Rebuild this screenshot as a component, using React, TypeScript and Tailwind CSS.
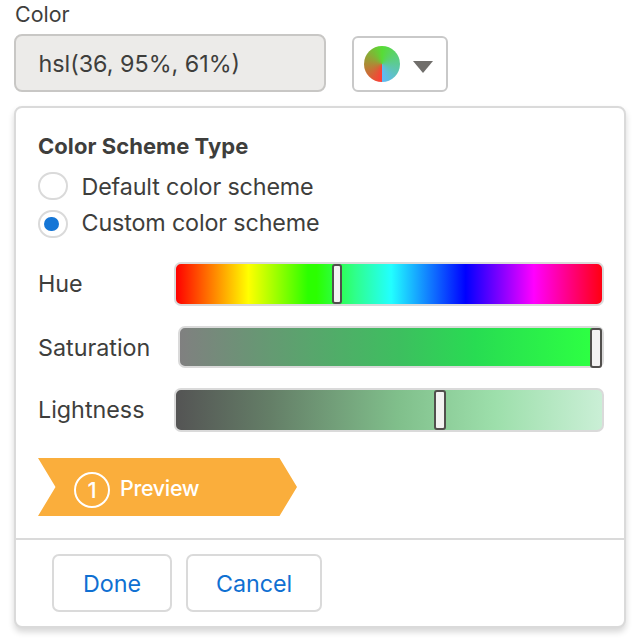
import type { ReactNode } from "react";

function Radio({ checked, label, className, labelClass }: { checked?: boolean; label: string; className: string; labelClass: string }) {
  return (
    <label className={`flex h-7 items-center ${className}`}>
      <span className="flex h-7 w-[30px] shrink-0 items-center rounded-full border-2 border-[#dadada] bg-white pl-1">
        {checked && <span className="h-3.5 w-[15px] rounded-[7px] bg-[#1576d6]" />}
      </span>
      <span className={`ml-[13.5px] whitespace-nowrap text-[23.3px] leading-7 tracking-[-0.14px] ${labelClass}`}>{label}</span>
    </label>
  );
}

function SliderRow({ label, className, labelClass = "", children }: { label: string; className: string; labelClass?: string; children: ReactNode }) {
  return (
    <div className={`flex items-center justify-between ${className}`}>
      <span className={`whitespace-nowrap text-[23.3px] leading-7 ${labelClass}`}>{label}</span>
      {children}
    </div>
  );
}

export default function App() {
  return (
    <main className="h-[642px] w-[642px] overflow-hidden bg-white pl-3.5 font-['Inter',sans-serif] text-[#3e3e3c]">
      <div className="h-[34px] pl-px text-[21.4px] leading-7">Color</div>
      <div className="flex items-end gap-[26px]">
        <div className="flex h-[58px] w-[312px] items-center rounded-lg border-2 border-[#c8c7c5] bg-[#ecebe9] pt-0.5 pl-[22.5px] text-[23.3px] whitespace-nowrap">
          hsl(36, 95%, 61%)
        </div>
        <button className="flex h-14 w-24 items-center rounded-md border-2 border-[#c9c9c9] bg-white pl-2.5">
          <span className="size-9 rounded-full bg-[conic-gradient(from_180deg,#ff3c37,#57dc35_50%,#62b8f8)]" />
          <svg className="mt-1.5 ml-[13px] h-3 w-5" viewBox="0 0 20 12">
            <path d="M0 0h20L10 12z" fill="#706e6b" />
          </svg>
        </button>
      </div>

      <section className="mt-3.5 h-[522px] w-[612px] rounded-lg border-2 border-[#dadada] bg-white shadow-[0_4px_6px_rgba(0,0,0,0.16)]">
        <div className="h-[430px] pr-5 pl-[22px]">
          <h2 className="pt-6 text-[22px] leading-7 font-bold tracking-[0.05px]">Color Scheme Type</h2>
          <Radio label="Default color scheme" className="mt-3" labelClass="pt-0.5" />
          <Radio label="Custom color scheme" className="mt-2.5" labelClass="pb-0.5" checked />

          <SliderRow label="Hue" className="mt-6 h-11">
            <div className="h-11 w-[430px] rounded-[7px] border-2 border-[#dadada] bg-[linear-gradient(to_right,#f00,#ff0_17%,#2bff00_31%,#2bff00_33%,#2fff8a_42%,#2ff_50.5%,#00f_68%,#f0f_84%,#ff0010)] bg-origin-padding">
              <div className="ml-[156px] h-10 w-2.5 rounded-[3px] border-2 border-[#514f4d] bg-[#f3f2f2]" />
            </div>
          </SliderRow>
          <SliderRow label="Saturation" className="mt-5 h-[42px]" labelClass="pt-0.5">
            <div className="flex h-[42px] w-[426px] justify-end rounded-[7px] border-2 border-[#dadada] bg-[linear-gradient(to_right,#808080,#3dbf5f_52%,#28dc52_70%,#2dff43_97%)]">
              <div className="h-10 w-3 shrink-0 rounded-[3px] border-2 border-[#514f4d] bg-[#f3f2f2]" />
            </div>
          </SliderRow>
          <SliderRow label="Lightness" className="mt-5 h-11">
            <div className="h-11 w-[430px] rounded-[7px] border-2 border-[#dadada] bg-[linear-gradient(to_right,#545454,#647e67_22%,#80bf8b_52%,#9ddfab_75%,#caefd6)]">
              <div className="ml-[258px] h-10 w-3 rounded-[3px] border-2 border-[#514f4d] bg-[#f3f2f2]" />
            </div>
          </SliderRow>

          <div className="mt-[26px] flex h-[58px] w-[259px] items-center bg-[#faae3c] pl-9 text-white [clip-path:polygon(0_0,241.5px_0,100%_50%,241.5px_100%,0_100%,17.5px_50%)]">
            <span className="mt-[6px] flex size-9 items-center justify-center rounded-full border-2 border-white text-[22px] font-medium">1</span>
            <span className="mt-[2px] ml-2.5 text-[21.4px] font-medium tracking-[-0.3px]">Preview</span>
          </div>
        </div>

        <footer className="flex h-[88px] gap-3.5 border-t-2 border-[#dadada] pt-3.5 pl-9 text-[23.3px] tracking-[-0.05px] text-[#0f70d2]">
          <button className="h-[58px] w-[120px] rounded-[7px] border-2 border-[#dadada] bg-white pt-0.5">Done</button>
          <button className="h-[58px] w-[136px] rounded-[7px] border-2 border-[#dadada] bg-white pt-0.5">Cancel</button>
        </footer>
      </section>
    </main>
  );
}
